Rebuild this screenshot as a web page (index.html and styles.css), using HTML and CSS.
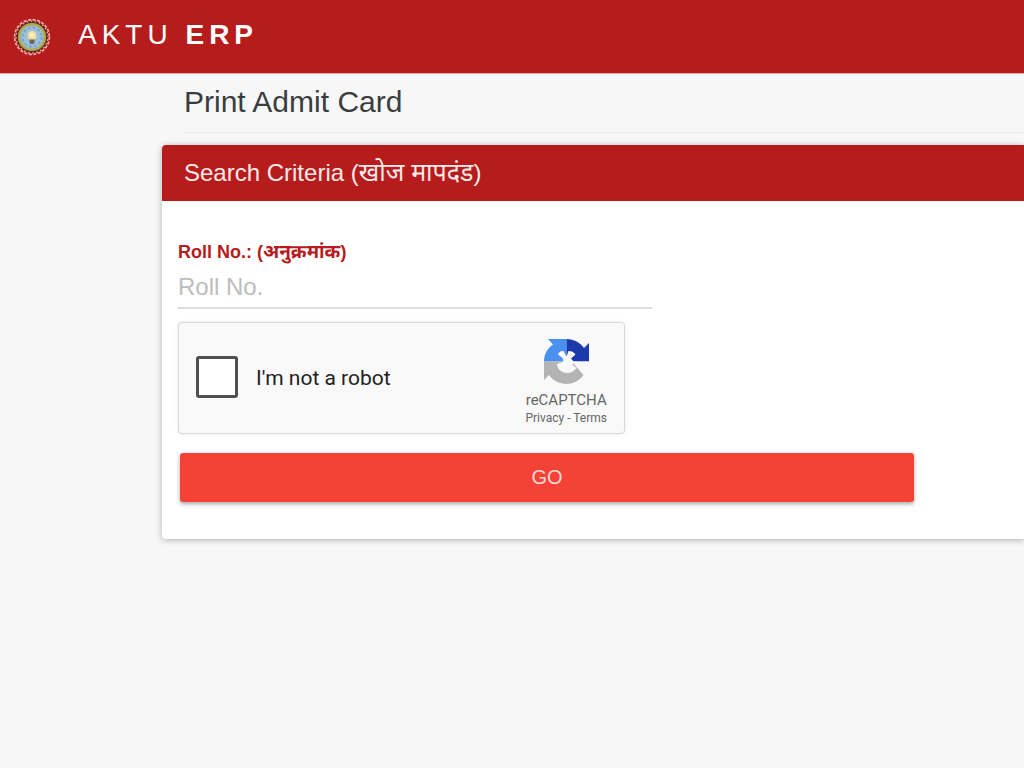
FILE: index.html
```html
<!DOCTYPE html>
<html lang="en">
  <head>
    <meta charset="utf-8">
    <meta name="viewport" content="width=device-width, initial-scale=1">
    <title>AKTU ERP</title>
    <link rel="stylesheet" href="styles.css">
  </head>

  <body>
    <header class="navbar">
      <svg class="navbar-logo" viewBox="0 0 38 38" aria-hidden="true">
        <circle cx="19" cy="19" r="16" fill="#6b2622"/>
        <circle cx="19" cy="19" r="17.4" fill="none" stroke="#f3b5b0" stroke-width="1.6" stroke-dasharray="3 1.555"/>
        <circle cx="19" cy="19" r="16" fill="none" stroke="#e9a9a0" stroke-width="1.4" stroke-dasharray="1.6 2.588" stroke-dashoffset="-2.300"/>
        <circle cx="19" cy="19" r="12.8" fill="#9cc0da" stroke="#a9ac50" stroke-width="2.6"/>
        <circle cx="19" cy="19" r="9.500" fill="none" stroke="#7fa3cf" stroke-width="2" stroke-dasharray="3 2"/>
        <circle cx="19" cy="17.5" r="4.500" fill="#f5dfa0"/>
        <circle cx="19" cy="17" r="2" fill="#fff6d5"/>
        <path d="M16.5 21.500h5v3l-1 1.500h-3l-1-1.500z" fill="#6e6553"/>
      </svg>
      <div class="brand">AKTU <b>ERP</b></div>
    </header>

    <main class="page">
      <h1 class="page-title">Print Admit Card</h1>

      <section class="card">
        <h2 class="card-header">Search Criteria (<span lang="hi">खोज मापदंड</span>)</h2>

        <form class="card-body">
          <div class="field">
            <label for="roll">Roll No.: (<span lang="hi">अनुक्रमांक</span>)</label>
            <input id="roll" name="roll" type="text" placeholder="Roll No.">
          </div>

          <div class="captcha">
            <input class="captcha-box" id="robot" type="checkbox">
            <label class="captcha-label" for="robot">I'm not a robot</label>
            <div class="captcha-brand">
              <svg class="captcha-logo" viewBox="0 0 45 45" aria-hidden="true">
                <path fill="#4a90ee" d="M22.500 0H4l5 5.500C3.500 9.500 0 15 0 22.500h18l4.500-3z"/>
                <path fill="#1c3aa9" d="M22.500 0v22.500H45V4l-5 5C36 3.500 30 0 22.500 0z"/>
                <path fill="#b4b4b4" d="M0 22.500V41l5-5c4 5.500 10 9 17.500 9 7 0 13-3.500 17-9L29 24l-6-1.500z"/>
                <path fill="#f9f9f9" d="M14 15.500C15 13 17 11.500 19.500 12l3 5.500L24.500 12c3 0 5.500 1 7 3.500L27 19.500l2.500 3H45v1.200H30L28.500 26l4 3c-2 3-5.500 5-9.500 5-5.500 0-9.500-4-10-9l7-2.500-1.500-3.500z"/>
              </svg>
              <div class="captcha-name">reCAPTCHA</div>
              <div class="captcha-links"><a href="#">Privacy</a> - <a href="#">Terms</a></div>
            </div>
          </div>

          <button class="btn-go" type="submit">GO</button>
        </form>
      </section>
    </main>
  </body>
</html>
```
FILE: styles.css
```css
* {
  box-sizing: border-box;
}
body {
  margin: 0;
  min-height: 100vh;
  background: #f7f7f7;
  color: #3a3d40;
  font-family: "Liberation Sans", Arial, "Noto Sans Devanagari", "Noto Sans", sans-serif;
}

/* top bar */
.navbar {
  display: flex;
  align-items: center;
  gap: 27px;
  height: 74px;
  padding: 0 13px;
  background: #b71c1c;
  border-bottom: 1px solid #e9a8a4;
}
.navbar-logo {
  width: 38px;
  height: 38px;
}
.brand {
  color: #fff;
  font-size: 28px;
  line-height: 32px;
  letter-spacing: 5px;
  padding-bottom: 4px;
}

/* page */
.page {
  padding-left: 162px;
}
.page-title {
  margin: 0 0 12px 22px;
  padding: 10px 0 12px;
  border-bottom: 1px solid #ebebeb;
  font-size: 30px;
  line-height: 36px;
  font-weight: 400;
}

/* search card */
.card {
  background: #fff;
  border-radius: 4px 0 0 4px;
  box-shadow: 0 1px 6px rgba(0, 0, 0, 0.3);
}
.card-header {
  margin: 0;
  padding: 12px 22px;
  border-radius: 4px 0 0 0;
  background: #b71c1c;
  color: #fbeaea;
  font-size: 24px;
  line-height: 32px;
  font-weight: 400;
}
.card-header span {
  font-size: 25px;
  line-height: 24px;
}
.card-body {
  padding: 39px 16px 37px;
}
.field {
  max-width: 474px;
}
.field label {
  display: block;
  color: #b71c1c;
  font-size: 18px;
  line-height: 24px;
  font-weight: 700;
}
.field label span {
  font-size: 19px;
  line-height: 18px;
}
.field input {
  display: block;
  width: 100%;
  height: 45px;
  padding: 2px 0 0;
  border: none;
  border-bottom: 2px solid #dcdcdc;
  background: none;
  font-family: inherit;
  font-size: 24px;
}
.field input::placeholder {
  color: #bdbdbd;
}

/* captcha */
.captcha {
  display: flex;
  align-items: center;
  max-width: 447px;
  height: 112px;
  margin: 13px 0 19px;
  padding: 0 17px;
  border: 1px solid #d9d9d9;
  border-radius: 4px;
  background: #f9f9f9;
  box-shadow: 0 0 4px rgba(0, 0, 0, 0.08);
  font-family: Roboto, sans-serif;
}
.captcha-box {
  appearance: none;
  width: 42px;
  height: 42px;
  margin: 0 18px 2px 0;
  border: 3px solid #4f4f4f;
  border-radius: 3px;
  background: #fff;
}
.captcha-label {
  flex: 1;
  color: #222;
  font-size: 21px;
  line-height: 24px;
}
.captcha-brand {
  display: flex;
  flex-direction: column;
  align-items: center;
  padding-top: 10px;
  color: #666;
}
.captcha-logo {
  width: 45px;
  height: 45px;
  margin-bottom: 7px;
}
.captcha-name {
  font-size: 15px;
  line-height: 18px;
}
.captcha-links {
  font-size: 12px;
  line-height: 18px;
}
.captcha-links a {
  color: inherit;
  text-decoration: none;
}

.btn-go {
  display: block;
  width: 100%;
  max-width: 734px;
  height: 49px;
  margin-left: 2px;
  border: none;
  border-radius: 3px;
  background: #f44336;
  color: #fcd9d5;
  box-shadow: 0 2px 4px rgba(0, 0, 0, 0.35);
  font-family: inherit;
  font-size: 20px;
  cursor: pointer;
}
```
